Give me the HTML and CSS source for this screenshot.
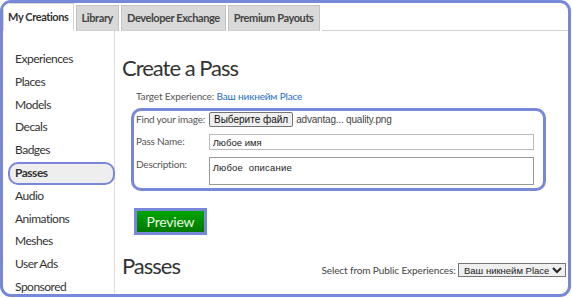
FILE: index.html
```html
<!DOCTYPE html>
<html lang="en">
  <head>
    <meta charset="UTF-8" />
    <title>Create a Pass</title>
    <link rel="stylesheet" href="styles.css">
  </head>
  <body>
    <div class="frame">
      <div class="tabs">
        <div class="tab active">My Creations</div>
        <div class="tab">Library</div>
        <div class="tab">Developer Exchange</div>
        <div class="tab">Premium Payouts</div>
        <div class="tabFill"></div>
      </div>
      <div class="content">
        <ul class="sidebar">
          <li>Experiences</li>
          <li>Places</li>
          <li>Models</li>
          <li>Decals</li>
          <li>Badges</li>
          <li class="selected">Passes</li>
          <li>Audio</li>
          <li>Animations</li>
          <li>Meshes</li>
          <li>User Ads</li>
          <li>Sponsored</li>
        </ul>
        <div class="main">
          <h1 class="title">Create a Pass</h1>
          <div class="target">Target Experience: <a href="#">Ваш никнейм Place</a></div>
          <div class="formBox">
            <div class="row">
              <label>Find your image:</label>
              <button class="fileBtn">Выберите файл</button>
              <span class="fileName">advantag... quality.png</span>
            </div>
            <div class="row">
              <label>Pass Name:</label>
              <input class="field" type="text" value="Любое имя">
            </div>
            <div class="row">
              <label>Description:</label>
              <textarea class="field area">Любое  описание</textarea>
            </div>
          </div>
          <button class="preview">Preview</button>
          <div class="passesRow">
            <h2 class="title passes">Passes</h2>
            <div class="selectWrap">
              Select from Public Experiences:
              <select class="expSelect"><option>Ваш никнейм Place</option></select>
            </div>
          </div>
        </div>
      </div>
    </div>
  </body>
</html>
```

FILE: styles.css
```css
* {
  margin: 0;
  padding: 0;
  box-sizing: border-box;
}
body {
  background: #fff;
  font-family: Lato, "Open Sans", sans-serif;
  color: #333;
}
.frame {
  width: 571px;
  height: 297px;
  border: 3px solid #7888d8;
  border-radius: 11px;
  overflow: hidden;
  display: flex;
  flex-direction: column;
}
.tabs {
  display: flex;
  align-items: flex-end;
  height: 29px;
}
.tab {
  height: 26px;
  margin-right: 2px;
  padding: 0 5px;
  background: #d9d9d9;
  border: 1px solid #c3c3c3;
  border-bottom: 1px solid #d0d0d0;
  font-size: 11px;
  font-weight: 700;
  letter-spacing: -0.4px;
  color: #444;
  line-height: 24px;
}
.tab.active {
  height: 28px;
  padding: 0 4px;
  background: #fff;
  border-color: #d6d6d6;
  border-bottom: 1px solid #fff;
  color: #333;
  line-height: 26px;
}
.tabFill {
  flex: 1;
  border-bottom: 1px solid #d0d0d0;
}
.content {
  flex: 1;
  display: flex;
}
.sidebar {
  list-style: none;
  width: 112px;
  border-right: 1px solid #ddd;
  padding-top: 17px;
}
.sidebar li {
  height: 22.8px;
  line-height: 22.8px;
  padding-left: 12px;
  font-size: 12px;
  letter-spacing: -0.5px;
  color: #333;
}
.sidebar li.selected {
  margin-left: 5px;
  margin-right: -1px;
  padding-left: 5px;
  background: #eee;
  border: 2px solid #7888d8;
  border-radius: 10px;
  line-height: 18.8px;
  font-weight: 700;
}
.main {
  flex: 1;
  padding-left: 7px;
}
.title {
  font-weight: 400;
  font-size: 22px;
  letter-spacing: -1px;
  color: #333;
  margin-top: 23px;
  line-height: 28px;
}
.target {
  margin: 8px 0 0 14px;
  font-size: 10px;
  line-height: 13px;
  letter-spacing: -0.15px;
  color: #555;
}
.target a {
  color: #1b6ec2;
  text-decoration: none;
}
.formBox {
  width: 415px;
  margin: 5px 0 0 9px;
  padding: 1px 9px 3px 2px;
  border: 3px solid #7888d8;
  border-radius: 10px;
}
.row {
  display: flex;
  align-items: flex-start;
  margin-bottom: 7px;
  font-size: 10px;
  letter-spacing: -0.2px;
  color: #555;
}
.row:last-child {
  margin-bottom: 0;
}
.row label {
  width: 73px;
  line-height: 15px;
  white-space: nowrap;
}
.fileBtn {
  font-family: "Liberation Sans", Arial, sans-serif;
  font-size: 10px;
  padding: 0 4px;
  height: 15px;
  background: #efefef;
  border: 1px solid #767676;
  border-radius: 2px;
  color: #111;
  margin-right: 3px;
}
.fileName {
  font-family: "Liberation Sans", Arial, sans-serif;
  font-size: 10px;
  color: #444;
  line-height: 15px;
}
.field {
  width: 327px;
  height: 16px;
  border: 1px solid #bbb;
  padding: 0 3px;
  font-family: "Liberation Sans", Arial, sans-serif;
  font-size: 9.5px;
  color: #222;
}
.area {
  height: 28px;
  border-color: #999;
  resize: none;
  padding-top: 4px;
  letter-spacing: 0.2px;
}
.preview {
  display: block;
  margin: 17px 0 0 12px;
  width: 73px;
  height: 27px;
  border: 3px solid #7888d8;
  background: linear-gradient(#03a503, #007800);
  color: #e8f8e8;
  font-family: Lato, sans-serif;
  font-size: 14px;
  letter-spacing: -0.2px;
}
.passesRow {
  display: flex;
  align-items: flex-start;
  justify-content: space-between;
}
.title.passes {
  margin-top: 17px;
}
.selectWrap {
  margin-top: 28px;
  margin-right: 2px;
  font-size: 10px;
  letter-spacing: -0.1px;
  color: #444;
}
.expSelect {
  font-family: "Liberation Sans", Arial, sans-serif;
  font-size: 9.5px;
  height: 14px;
  width: 108px;
  padding-left: 1px;
  border: 1px solid #767676;
  color: #222;
}
```
